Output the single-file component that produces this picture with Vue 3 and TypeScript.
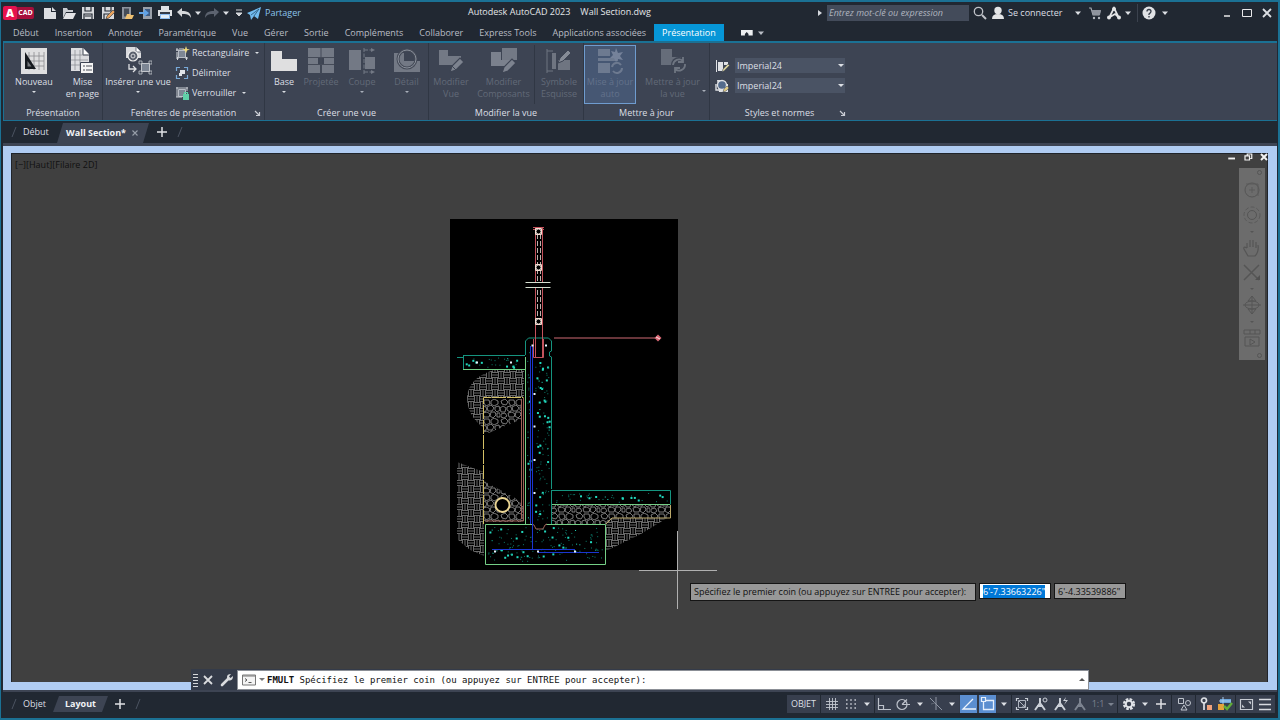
<script setup lang="ts">
import { onMounted, ref } from 'vue'

interface Cell { name: string; width: number; label: string; on?: boolean; edge?: boolean }
interface Speck { x: number; y: number; r: number; c: string }

const caret = '<path d="M5 6.5h6L8 10z" fill="currentColor"/>'
const icons: Record<string, string> = {
  caret,
  fresh: '<path d="M2 3h7v4h5v7H2z" fill="#dcdee2"/><path d="M10 2l4 4h-4z" fill="#dcdee2"/>',
  open: '<path d="M2 13V3h4l1 2h5v2H5z" fill="#c9ccd1"/><path d="M5 8h10l-3 6H2z" fill="#e2e3e6"/>',
  save: '<path d="M2 2h12v12H2z" fill="#d6d8dc"/><path d="M5 2v4h6V2M4 14V9h8v5M5 11h6" fill="none" stroke="#242b35" stroke-width="1.2"/>',
  saveas: '<path d="M2 2h12v12H2z" fill="#d6d8dc"/><path d="M5 2v4h6V2M4 14V9h5" fill="none" stroke="#242b35" stroke-width="1.2"/><path d="M6 14l1-3 6-6 2 2-6 6z" fill="#e9a35e" stroke="#242b35" stroke-width=".6"/>',
  mobileOpen: '<path d="M3 2h9v12H3z" fill="#8d939d"/><path d="M5 3.500h5v8H5z" fill="#454c57"/><path d="M6 14l2-5h3l1 1h3l-2 4z" fill="#eec071"/>',
  mobileSave: '<path d="M5 2h9v12H5z" fill="#9aa0a9"/><path d="M7 4h5v7H7z" fill="#3f5d85"/><path d="M1 7h5V4l5 4-5 4V9H1z" fill="#63a4e6"/>',
  print: '<path d="M4 1h8v4H4zM1 5h14v6H1z" fill="#dfe1e4"/><path d="M3 7h10v2H3z" fill="#343b49"/><path d="M3 9h10v5H3z" fill="#8dbbf0"/><path d="M4 10h8v3H4z" fill="#e2edf9"/>',
  undo: '<path d="M1 7l5-4v3c5 0 9 1 9 7-2-4-5-4-9-4v3z" fill="#d5d7da"/>',
  redo: '<path d="M15 7l-5-4v3c-5 0-9 1-9 7 2-4 5-4 9-4v3z" fill="#5c6370"/>',
  more: '<path d="M5 5h6M5 8h6l-3 3z" fill="#d5d7da" stroke="#d5d7da"/>',
  plane: '<path d="M1 8l14-6-3 12-4-3-3 4-1-5z" fill="#72bcf0"/><path d="M5 10l8-6-5 7" fill="none" stroke="#2a5577" stroke-width=".8"/>',
  search: '<circle cx="6.500" cy="6.500" r="4.200" fill="none" stroke="#bfc2c8" stroke-width="1.300"/><path d="M10 10l4 4" stroke="#bfc2c8" stroke-width="2"/>',
  user: '<circle cx="8" cy="5.500" r="3.700" fill="#e3e4e6"/><path d="M2 14q0-5 6-5t6 5z" fill="#e3e4e6"/>',
  cart: '<path d="M2 3h2l2 7h6l1-4H5" fill="none" stroke="#a5a9b0" stroke-width="1.200"/><path d="M5 5h9l-1 5H6z" fill="#8f949d"/><circle cx="7" cy="13" r="1.200" fill="#b5b8be"/><circle cx="12" cy="13" r="1.200" fill="#b5b8be"/>',
  autodesk: '<path d="M3 13L8 3l5 10M4 12l5-3 4 4" fill="none" stroke="#e3e4e6" stroke-width="1.700"/><circle cx="8" cy="4" r="2" fill="#e3e4e6"/><circle cx="3" cy="12.500" r="2" fill="#e3e4e6"/><circle cx="13" cy="12.500" r="2" fill="#e3e4e6"/>',
  help: '<circle cx="8" cy="8" r="6.500" fill="#e0e2e5"/><path d="M6 6.500q0-2 2-2t2 2q0 1-2 2.500v1M8 11v1.500" fill="none" stroke="#343b47" stroke-width="1.300"/>',
  minimize: '<path d="M5 11h6" stroke="#e8e8ea" stroke-width="1.500"/>',
  minimizeDoc: '<path d="M3 10h9" stroke="#f2f2f2" stroke-width="2.500"/>',
  maximize: '<path d="M3.500 4.500h9v7h-9z" fill="none" stroke="#e8e8ea"/>',
  restore: '<path d="M4 6.500h6v5.500H4zM7 5.500V4h6v6h-2" fill="none" stroke="#f2f2f2" stroke-width="1.600"/>',
  close: '<path d="M4 4l8 8M12 4l-8 8" stroke="currentColor" stroke-width="1.800"/>',
  closeDoc: '<path d="M4 4l8 8M12 4l-8 8" stroke="#f2f2f2" stroke-width="2.600"/>',
  plus: '<path d="M3 8h10M8 3v10" stroke="#dfe1e5" stroke-width="1.500"/>',
  slash: '<path d="M6 13l4-10" stroke="#4b5361"/>',
  launcher: '<path d="M5 5l4 4M9.500 6v3.500H6" fill="none" stroke="#c9ccd3" stroke-width="1.200"/>',
  grid: '<path d="M5.500 2v12M8.500 2v12M11.500 2v12M2 5.500h12M2 8.500h12M2 11.500h12" stroke="#c3c7cf" stroke-width=".9"/>',
  snap: '<path d="M3 4h10M3 8h10M3 12h10" stroke="#c3c7cf" stroke-width="1.600" stroke-dasharray="1.600 2.600"/>',
  ortho: '<path d="M2.500 2v11.500H15M2.500 9.500h5v4" fill="none" stroke="#bcc1ca" stroke-width="1.200"/>',
  polar: '<circle cx="7" cy="8.500" r="5" fill="none" stroke="#bcc1ca" stroke-width="1.200"/><path d="M7 8.500h8M7 8.500l5-5" stroke="#bcc1ca" stroke-width="1.200"/>',
  iso: '<path d="M2 2l12 12M8 1v13" stroke="#8f96a3"/><path d="M3 8l4-1" stroke="#5e6572"/>',
  track: '<path d="M15 13H2L12 3" fill="none" stroke="#eef4fc" stroke-width="1.300"/>',
  osnap: '<path d="M5 4.500h8.500v9h-10V6" fill="none" stroke="#e5effc" stroke-width="1.300"/><path d="M1.500 1.500h4v4h-4z" fill="#5c8fd2" stroke="#e5effc" stroke-width="1.200"/>',
  space: '<path d="M2.500 5V2.500H5M11 2.500h2.500V5M13.500 11v2.500H11M5 13.500H2.500V11" fill="none" stroke="#cbd0d8" stroke-width="1.200"/><path d="M4.500 4.500h7v7h-7zM5 5l6 6M8 11h3V8" fill="none" stroke="#aeb4bf"/>',
  annoVis: '<path d="M7 2v6M7 7l-5 7M7 7l5 7M4 10h6" fill="none" stroke="#cbd0d8" stroke-width="2"/><circle cx="12" cy="4" r="2" fill="none" stroke="#cbd0d8"/>',
  annoAuto: '<path d="M7 2v6M7 7l-5 7M7 7l5 7M4 10h6" fill="none" stroke="#cbd0d8" stroke-width="2"/><path d="M13 1l-3 4h3l-2 4 4-5h-3z" fill="#cbd0d8"/>',
  annoScale: '<path d="M8 2v6M8 7l-5 7M8 7l5 7M5 10h6" fill="none" stroke="#7c8390" stroke-width="2"/>',
  gear: '<circle cx="8" cy="8" r="4.800" fill="none" stroke="#dfe2e7" stroke-width="2.600" stroke-dasharray="2.500 1.270"/><circle cx="8" cy="8" r="3.200" fill="none" stroke="#dfe2e7" stroke-width="2"/>',
  shapes: '<path d="M2.500 2.500h5v5h-5zM5 14l3-5 3 5z" fill="none" stroke="#bfc4cd"/><circle cx="12" cy="7" r="2.500" fill="none" stroke="#bfc4cd"/>',
  isolate: '<circle cx="6" cy="4.500" r="2.500" fill="none" stroke="#dde0e5" stroke-width="1.700"/><path d="M6 6v8" stroke="#dde0e5" stroke-width="1.700"/><path d="M9 9h5v5H9z" fill="#f0a27c"/>',
  perf: '<path d="M3 3h11v4H3z" fill="#6ba4da"/><path d="M6 1v9M2 5h12" stroke="#a7cbee"/><path d="M1 8h6v6H1z" fill="#e4a33c"/><path d="M7 10l3 3 5-6" fill="none" stroke="#61ad38" stroke-width="2.500"/>',
  full: '<path d="M2.500 3.500h12v10h-12z" fill="none" stroke="#c5cad2" stroke-width="1.200"/><path d="M10 5.500h3v3zM4 8.500v3h3z" fill="#c5cad2"/>',
  menu: '<path d="M2 3.500h12M2 8.500h12M2 13.500h12" stroke="#d7dae0" stroke-width="1.500"/>',
  wrench: '<path d="M3 13l6-6" stroke="#dadcdf" stroke-width="2.600" stroke-linecap="round"/><path d="M8 5q0-3 4-3l-2 2.500 1.500 1.500L14 4q0 4-3 4.500T8 5" fill="#dadcdf"/>',
  prompt: '<path d="M1.500 3h13v10h-13z" fill="#f4f4f4" stroke="#777"/><path d="M2 4h12" stroke="#777"/><path d="M4 6.500l2 1.500-2 1.500M7.500 10.500h3" fill="none" stroke="#555"/>',
  rect: '<path d="M4.500 5.500h7v7h-7z" fill="#7d8694" stroke="#b8bdc6"/><path d="M2 5h3M3 3v3M2 13h3M3.500 12v3M11 13h3M12.500 12v3M5 4h5M3 7v5" stroke="#d3d6db"/><path d="M12 1l1 3 3 .5-3 1-1 3-1-3-3-1 3-.5z" fill="#f2dc7c"/>',
  clip: '<path d="M2.500 6V2.500H6M10 2.500h3.500V6M13.500 10v3.500H10M6 13.500H2.500V10" fill="none" stroke="#78a9d8" stroke-width="1.200"/><path d="M6 5h5v4H6zM5 8h3v3H5z" fill="#dfe4ea"/>',
  lock: '<path d="M4.500 4.500h7v7h-7z" fill="#7d8694" stroke="#b8bdc6"/><path d="M2 3h12M3 2v10M2 12h6M13 2v4" stroke="#c5c9d0"/><path d="M9 9h6v6H9z" fill="#5fd0a8"/><path d="M10.500 9V7.500h3V9" fill="none" stroke="#5fd0a8" stroke-width="1.200"/>',
  style1: '<path d="M2 2h1v12H2z" fill="#dfe1e5"/><path d="M4 4h5v9H4z" fill="#dfe1e5"/><path d="M10 4h4v3h-4z" fill="#dfe1e5"/><path d="M8 14l1-3 5-5 1.500 1.500-5 5z" fill="#d7cf9c" stroke="#3d4453" stroke-width=".5"/>',
  style2: '<path d="M3 2h5v4h6v8H5z" fill="#dfe1e5"/><circle cx="8" cy="7" r="4.500" fill="#546b8c" stroke="#dfe1e5" stroke-width="1.300"/><path d="M2 6v6h6" fill="none" stroke="#dfe1e5" stroke-width="1.400"/><path d="M9 14l1-3 3-3 2 2-3 3z" fill="#e0cb85" stroke="#3d4453" stroke-width=".5"/>'
}

/* 28 x 28 ribbon artwork */
const art: Record<string, string> = {
  fresh: '<path d="M1 1h26v26H1z" fill="#dfdfe0"/><path d="M9 5v18M14 5v18M19 5v18M24 5v18M5 9h19M5 14h19M5 19h19" stroke="#8b8c90" stroke-width=".8"/><path d="M5 5v17h11z" fill="#15181d"/><path d="M7.500 14v5.500h4z" fill="#75777b"/>',
  page: '<path d="M2 1h12l6 6v17H2z" fill="#dcdde0"/><path d="M14 1v7h6" fill="#fff" stroke="#3d4453"/><path d="M6 3v20M11 3v20M2 8h17M2 13h17M2 18h10" stroke="#85888e" stroke-width=".7"/><path d="M11.500 15.500h13v11h-13z" fill="#f4f4f4" stroke="#3d4453"/><path d="M14 19h2M17 19h6M14 23h2M17 23h6" stroke="#4b4f58" stroke-width="1.200"/>',
  insert: '<path d="M2 0h10l5 5v6H2z" fill="#d8d9dc"/><path d="M12 0v5h5" fill="#fff" stroke="#3d4453" stroke-width=".7"/><circle cx="9" cy="9" r="5" fill="#5a606d" stroke="#eee" stroke-width="1.200"/><circle cx="9" cy="9" r="2" fill="none" stroke="#d8d9dc"/><path d="M5 17v5h6M9 19l3 3-3 3" fill="none" stroke="#dfe1e4" stroke-width="1.300"/><path d="M17.500 16.500h8v8h-8z" fill="#7d8694" stroke="#c3c6cc"/><path d="M15 14h3v3h-3zM25 14h3v3h-3zM15 24h3v3h-3zM25 24h3v3h-3z" fill="none" stroke="#c3c6cc" stroke-width=".8"/>',
  base: '<path d="M1 4h11v8h15v12H1z" fill="#dfdfe0"/>',
  projected: '<path d="M1 1h26v9H1zM1 17h10v-6H1zM17 11h10v6H17zM1 18h12v8H1zM15 18h12v8H15z" fill="#737985"/><path d="M14 1v26M1 10.500h26M1 17.500h26" stroke="#454b58"/>',
  section: '<path d="M1 3h12v20H1zM17 10h10v12H17z" fill="#737985"/><path d="M16 1v26M16 3h8M16 25h8" stroke="#737985" stroke-dasharray="4 1.500"/><path d="M23 1l4 2-4 2zM23 23l4 2-4 2z" fill="#737985"/>',
  detail: '<path d="M1 6h10v8h16v11H1z" fill="#737985"/><circle cx="14" cy="12" r="9" fill="none" stroke="#454b58" stroke-width="3"/><circle cx="14" cy="12" r="9" fill="none" stroke="#8a909b" stroke-width="1"/>',
  editView: '<path d="M2 3h9v6h13v9H2z" fill="#737985"/><path d="M13 25l2-6 8-8 4 4-8 8z" fill="#7d838f" stroke="#3d4453" stroke-width="1.200"/><path d="M15 19l4 4" stroke="#3d4453"/>',
  editParts: '<path d="M12 1h15v12H12z" fill="#737985"/><path d="M1 5h10v8h12v6H1z" fill="#7b818d"/><path d="M12 26l2-6 8-8 4 4-8 8z" fill="#7d838f" stroke="#3d4453" stroke-width="1.200"/>',
  symbol: '<path d="M2 2v24M2 4h6M2 24h6" stroke="#6f7581"/><path d="M7 6h4v16H7zM13 13h12v10H13z" fill="#6f7581"/><path d="M13 16l2-5 8-8 3 3-8 8z" fill="#858b96" stroke="#3d4453"/>',
  auto: '<path d="M2 2h12v7H2zM2 16h12v10H2zM2 11h20v3H2z" fill="#6d7a90"/><path d="M20 1l2 5 5-1-3 4 3 4-5-1-2 3-2-4-4 0 3-3-2-4 4 1z" fill="#75829a"/><path d="M16 20a5 5 0 0 1 9-2M26 21a5 5 0 0 1-9 3" fill="none" stroke="#6d7a90" stroke-width="2"/>',
  update: '<path d="M2 2h11v8h9v8H2z" fill="#666d7a"/><circle cx="20" cy="18" r="8" fill="#3d4453"/><path d="M14 18a6 6 0 0 1 10-4M26 17a6 6 0 0 1-10 5M24 10v5h-5M16 26v-5h5" fill="none" stroke="#6f7682" stroke-width="1.800"/>'
}

const navArt = [
  { drop: false, d: '<circle cx="10" cy="10" r="7" fill="none" stroke="#555"/><path d="M4 4h12v12M7 10h6M10 7v6" fill="none" stroke="#5a5a5a"/>' },
  { drop: true, d: '<circle cx="10" cy="10" r="4.500" fill="none" stroke="#555"/><circle cx="10" cy="10" r="8" fill="none" stroke="#5a5a5a" stroke-dasharray="4 2"/>' },
  { drop: false, d: '<path d="M5 10V5M8 9V2M11 9V2M14 10V4M5 10q-4-2-3 1l4 7h7q4-4 3-11" fill="none" stroke="#555" stroke-width="1.200"/>' },
  { drop: true, d: '<path d="M2 2l15 15M17 2L2 17" stroke="#555" stroke-width="1.500"/><path d="M13 17h5v-5z" fill="#505050"/>' },
  { drop: true, d: '<path d="M10 1v18M1 10h18M10 1L6 6h8zM10 19l-4-5h8z" fill="none" stroke="#555"/><ellipse cx="10" cy="10" rx="7" ry="4" fill="none" stroke="#555"/>' },
  { drop: false, d: '<path d="M2 2h16v4H2zM3 9h14v9H3zM8 11l5 3-5 3zM8 2v4M13 2v4" fill="none" stroke="#555"/>' }
]

const quick: Cell[] = [
  { name: 'fresh', width: 19, label: 'Nouveau' }, { name: 'open', width: 19, label: 'Ouvrir' },
  { name: 'save', width: 20, label: 'Enregistrer' }, { name: 'saveas', width: 19, label: 'Enregistrer sous' },
  { name: 'mobileOpen', width: 19, label: 'Ouvrir depuis mobile' }, { name: 'mobileSave', width: 19, label: 'Enregistrer sur mobile' },
  { name: 'print', width: 20, label: 'Tracer' }, { name: 'undo', width: 18, label: 'Annuler' },
  { name: 'caret', width: 10, label: 'Historique' }, { name: 'redo', width: 18, label: 'Rétablir' },
  { name: 'caret', width: 10, label: 'Historique' }, { name: 'more', width: 15, label: 'Personnaliser' }
]
const tabs = ['Début', 'Insertion', 'Annoter', 'Paramétrique', 'Vue', 'Gérer', 'Sortie', 'Compléments', 'Collaborer', 'Express Tools', 'Applications associées', 'Présentation']
const account: Cell[] = [
  { name: 'caret', width: 12, label: 'Compte' }, { name: 'cart', width: 22, label: 'App Store' }, { name: 'autodesk', width: 16, label: 'Autodesk' },
  { name: 'caret', width: 12, label: 'Options' }, { name: 'help', width: 22, label: 'Aide', edge: true }, { name: 'caret', width: 12, label: 'Options aide' }
]
const views = ['rect', 'clip', 'lock']
const viewLabels = ['Rectangulaire', 'Délimiter', 'Verrouiller']
const createItems = [
  { art: 'base', label: 'Base', off: false, drop: true }, { art: 'projected', label: 'Projetée', off: true, drop: false },
  { art: 'section', label: 'Coupe', off: true, drop: true }, { art: 'detail', label: 'Détail', off: true, drop: true }
]
const status: Cell[] = [
  { name: 'grid', width: 22, label: 'Grille', edge: true }, { name: 'snap', width: 17, label: 'Résolution' }, { name: 'caret', width: 15, label: 'Options de résolution' },
  { name: 'ortho', width: 19, label: 'Ortho', edge: true }, { name: 'polar', width: 20, label: 'Polaire' }, { name: 'caret', width: 14, label: 'Options polaires' },
  { name: 'iso', width: 18, label: 'Isométrique' }, { name: 'caret', width: 14, label: 'Options isométriques' },
  { name: 'track', width: 19, label: 'Repérage', on: true }, { name: 'osnap', width: 19, label: 'Accrochage', on: true }, { name: 'caret', width: 14, label: 'Options accrochage' },
  { name: 'space', width: 20, label: 'Fenêtre', edge: true }, { name: 'annoVis', width: 20, label: 'Visibilité annotations' }, { name: 'annoAuto', width: 20, label: 'Échelle auto' }, { name: 'annoScale', width: 18, label: 'Échelle' }
]
const statusEnd: Cell[] = [
  { name: 'gear', width: 22, label: 'Espace de travail', edge: true }, { name: 'caret', width: 12, label: 'Options espace' }, { name: 'plus', width: 20, label: 'Ajouter' },
  { name: 'shapes', width: 24, label: 'Unités', edge: true }, { name: 'isolate', width: 20, label: 'Isoler', edge: true }, { name: 'perf', width: 20, label: 'Performances' },
  { name: 'full', width: 20, label: 'Plein écran', edge: true }, { name: 'menu', width: 20, label: 'Personnalisation' }
]

/* Concrete aggregate: seeded so that the section always looks the same */
let seed = 41
const rnd = () => { seed = (seed * 16807) % 2147483647; return seed / 2147483647 }
function scatter(x: number, y: number, w: number, h: number, n: number): Speck[] {
  return Array.from({ length: n }, () => {
    const k = rnd()
    return { x: x + 1 + rnd() * (w - 3), y: y + 1 + rnd() * (h - 3), r: k > 0.8 ? 2 : 1, c: k > 0.72 ? '#22d8bd' : '#0c7d6c' }
  })
}
const specks: Speck[] = [
  ...scatter(464, 356, 60, 13, 26), ...scatter(534, 360, 17, 162, 100), ...scatter(526, 345, 6, 178, 30),
  ...scatter(486, 526, 118, 37, 140), ...scatter(553, 492, 116, 12, 40)
]
const bars = [[477, 362.500], [511, 362.500], [532.500, 345.500], [546, 345.500], [534.500, 394], [534.500, 426.500], [534.500, 460], [534.500, 493], [495, 551.500], [538, 551.500], [575, 551.500]]

const coordX = ref<HTMLInputElement | null>(null)
onMounted(() => { coordX.value?.focus(); coordX.value?.select() })
</script>

<template>
  <main class="app">
    <header class="titlebar">
      <button class="logo" aria-label="Menu AutoCAD"><b>A</b><span>CAD</span></button>
      <button v-for="(q, i) in quick" :key="i" class="cell" :style="{ width: q.width + 'px' }" :aria-label="q.label"><svg class="ico" viewBox="0 0 16 16" v-html="icons[q.name]" /></button>
      <button class="share"><svg class="ico" viewBox="0 0 16 16" v-html="icons.plane" />Partager</button>
      <h1 class="title"><span>Autodesk AutoCAD 2023</span><span>Wall Section.dwg</span></h1>
      <span class="play"></span>
      <input class="search" type="text" placeholder="Entrez mot-clé ou expression" aria-label="Recherche">
      <button class="cell w20" aria-label="Rechercher"><svg class="ico" viewBox="0 0 16 16" v-html="icons.search" /></button>
      <button class="signin"><svg class="ico" viewBox="0 0 16 16" v-html="icons.user" />Se connecter</button>
      <button v-for="(q, i) in account" :key="'a' + i" class="cell" :class="{ edge: q.edge }" :style="{ width: q.width + 'px' }" :aria-label="q.label"><svg class="ico" viewBox="0 0 16 16" v-html="icons[q.name]" /></button>
      <div class="winctl">
        <button v-for="n in ['minimize', 'maximize', 'close']" :key="n" class="cell w20" :aria-label="n"><svg class="ico" viewBox="0 0 16 16" v-html="icons[n]" /></button>
      </div>
    </header>

    <nav class="tabs">
      <button v-for="t in tabs" :key="t" :class="{ active: t === 'Présentation' }">{{ t }}</button>
      <button class="collapse" aria-label="Réduire le ruban"><i></i><svg class="ico" viewBox="0 0 16 16" v-html="icons.caret" /></button>
    </nav>

    <section class="ribbon">
      <div class="panel p1">
        <div class="tools">
          <button class="big"><svg class="art" viewBox="0 0 28 28" v-html="art.fresh" /><span>Nouveau</span><i class="tri"></i></button>
          <button class="big"><svg class="art" viewBox="0 0 28 28" v-html="art.page" /><span>Mise<br>en page</span></button>
        </div>
        <h2>Présentation</h2>
      </div>
      <div class="panel p2">
        <div class="tools">
          <button class="big"><svg class="art" viewBox="0 0 28 28" v-html="art.insert" /><span>Insérer une vue</span><i class="tri"></i></button>
          <div class="rows">
            <button v-for="(v, i) in views" :key="v"><svg class="ico" viewBox="0 0 16 16" v-html="icons[v]" />{{ viewLabels[i] }}<i v-if="i !== 1" class="tri"></i></button>
          </div>
        </div>
        <h2>Fenêtres de présentation</h2>
        <svg class="launch" viewBox="0 0 14 14" v-html="icons.launcher" />
      </div>
      <div class="panel p3">
        <div class="tools">
          <button v-for="c in createItems" :key="c.art" class="big" :class="{ off: c.off }"><svg class="art" viewBox="0 0 28 28" v-html="art[c.art]" /><span>{{ c.label }}</span><i v-if="c.drop" class="tri"></i></button>
        </div>
        <h2>Créer une vue</h2>
      </div>
      <div class="panel p4">
        <div class="tools">
          <button class="big off"><svg class="art" viewBox="0 0 28 28" v-html="art.editView" /><span>Modifier<br>Vue</span></button>
          <button class="big off"><svg class="art" viewBox="0 0 28 28" v-html="art.editParts" /><span>Modifier<br>Composants</span></button>
          <button class="big off ruled"><svg class="art" viewBox="0 0 28 28" v-html="art.symbol" /><span>Symbole<br>Esquisse</span></button>
        </div>
        <h2>Modifier la vue</h2>
      </div>
      <div class="panel p5">
        <div class="tools">
          <button class="big off lit"><svg class="art" viewBox="0 0 28 28" v-html="art.auto" /><span>Mise à jour<br>auto</span></button>
          <button class="big off"><svg class="art" viewBox="0 0 28 28" v-html="art.update" /><span>Mettre à jour<br>la vue</span><i class="tri side"></i></button>
        </div>
        <h2>Mettre à jour</h2>
      </div>
      <div class="panel p6">
        <div class="styles">
          <label v-for="n in ['style1', 'style2']" :key="n"><svg class="ico" viewBox="0 0 16 16" v-html="icons[n]" /><span class="pick"><select :aria-label="n === 'style1' ? 'Style de vue en coupe' : 'Style de vue de détail'"><option>Imperial24</option></select><i class="tri"></i></span></label>
        </div>
        <h2>Styles et normes</h2>
        <svg class="launch" viewBox="0 0 14 14" v-html="icons.launcher" />
      </div>
    </section>

    <nav class="files">
      <svg class="ico" viewBox="0 0 16 16" v-html="icons.slash" />
      <button class="plain">Début</button>
      <button class="current">Wall Section*<svg class="ico" viewBox="0 0 16 16" v-html="icons.close" /></button>
      <button class="cell w20" aria-label="Nouveau dessin"><svg class="ico" viewBox="0 0 16 16" v-html="icons.plus" /></button>
      <svg class="ico" viewBox="0 0 16 16" v-html="icons.slash" />
    </nav>

    <section class="frame">
      <div class="canvas">
        <span class="viewlabel">[−][Haut][Filaire 2D]</span>
        <svg class="sheet" viewBox="450 219 228 351" role="img" aria-label="Coupe de mur">
          <defs>
            <pattern id="weave" width="12" height="12" patternUnits="userSpaceOnUse">
              <path d="M0 .5h6M0 3h6M0 5.500h6M6.500 0v6M9 0v6M11.500 0v6M.5 6v6M3 6v6M5.500 6v6M6 6.500h6M6 9h6M6 11.500h6" stroke="#858585" stroke-width=".8" />
            </pattern>
            <pattern id="gravel" width="25" height="19" patternUnits="userSpaceOnUse">
              <path d="M1 2l4-2 3 3-2 3-4-1zM9 1l5 0 1 4-4 2-2-3zM16 2l3-2 4 2 0 3-4 2-3-2zM0 9l3-2 3 2-1 4-4 0zM7 8l3-1 2 3-2 3-3-2zM12 8l4-2 3 3-2 3-4 0zM20 8l4-1 1 4-3 2-2-2zM1 15l4-1 2 3-3 2-3-1zM8 14l4-1 3 2-1 3-5 0zM16 13l4 0 1 3-3 3-3-2zM22 14l3 0 0 4-3 0z" fill="none" stroke="#969696" stroke-width=".8" />
            </pattern>
          </defs>
          <path d="M450 219h228v351H450z" fill="#000" />
          <path d="M494 370h30v28h-40v30q-17-12-17-31 2-20 27-27z" fill="url(#weave)" />
          <path d="M457 462l27 10v84l-14-6-13-11z" fill="url(#weave)" />
          <path d="M606 524l6-6h55l-26 16-35 17z" fill="url(#weave)" />
          <path d="M484 399h38v20l-38 16zM484 481l31 17 8 7v17h-39zM552 505h118v13h-58l-6 6h-54z" fill="url(#gravel)" />
          <rect v-for="(s, i) in specks" :key="i" :x="s.x" :y="s.y" :width="s.r" :height="s.r" :fill="s.c" />
          <path d="M457 357.500h6M463 355.500h62M525.500 355v-14l3-3h20l3 3v10l-2 1v4l2 1v132M552 490.500h118.500v14M551.500 490v34M463.500 356v13" fill="none" stroke="#15947f" />
          <path d="M463 369.500h62M525.500 357v167M485.500 524.500h47M546 524.500h59.500v40h-120v-40M552 504.500h118" fill="none" stroke="#74cf86" />
          <path d="M532 524l2 1 2 4h7l2-4 2-1M523.500 398v123h-38M521.500 399v120" fill="none" stroke="#a06358" />
          <path d="M483.500 524V397.500h40" fill="none" stroke="#d3bf65" stroke-dasharray="14 1" />
          <path d="M670.500 505v13H612l-6 6" fill="none" stroke="#bba86a" />
          <path d="M530.500 346v178M532.500 345v205M492 549.500h83M538 552.500h61" fill="none" stroke="#1b35d0" />
          <path d="M535.500 228v129M542.500 228v129M533.500 339v18.500h10V339M533 227.500h11M533 229.500h11" fill="none" stroke="#c4525c" />
          <path d="M554 338h101" stroke="#cf6b74" />
          <path d="M537.500 234v88M540.500 234v88" stroke="#bdb1ae" stroke-dasharray="5 2" />
          <path d="M526 285h24" stroke="#000" stroke-width="4" />
          <path d="M525.500 282.500h25M525.500 287.500h25" stroke="#d5ded0" />
          <g v-for="y in [231.500, 267.500, 321.500]" :key="y">
            <path :d="`M535.500 ${y - 3}h6v6h-6z`" fill="#000" stroke="#f2d9cd" /><circle cx="538.500" :cy="y" r="2.600" fill="#000" stroke="#fff0e8" />
          </g>
          <path d="M658 334.500l3.500 3.500-3.500 3.500-3.500-3.500z" fill="#d96875" /><path d="M656 337l4 2" stroke="#fff" stroke-width=".8" />
          <circle cx="502.500" cy="505" r="7" fill="#000" stroke="#ecd693" stroke-width="1.800" />
          <rect v-for="(b, i) in bars" :key="'b' + i" :x="b[0] - 1" :y="b[1] - 1" width="2" height="2" fill="#e9f5ff" />
        </svg>
        <svg class="cross" viewBox="0 0 78 78"><path d="M38.500 0v78M0 39.500h78" stroke="#b0b0b0" /></svg>
        <div class="dynamic">
          <label for="cx">Spécifiez le premier coin (ou appuyez sur ENTREE pour accepter):</label>
          <input id="cx" ref="coordX" type="text" class="sel" value="6'-7.33663226&quot;">
          <input type="text" aria-label="Y" value="6'-4.33539886&quot;">
        </div>
        <div class="docctl">
          <button v-for="n in ['minimizeDoc', 'restore', 'closeDoc']" :key="n" class="cell" :aria-label="n"><svg class="ico" viewBox="0 0 16 16" v-html="icons[n]" /></button>
        </div>
        <div class="navbar">
          <i class="knob"></i>
          <template v-for="(n, i) in navArt" :key="i">
            <button :aria-label="'Navigation ' + (i + 1)"><svg viewBox="0 0 20 20" v-html="n.d" /></button>
            <i v-if="n.drop" class="tri"></i>
          </template>
          <i class="knob"></i>
        </div>
      </div>
      <div class="command">
        <i class="grip"></i>
        <button class="cell" aria-label="Fermer"><svg class="ico" viewBox="0 0 16 16" v-html="icons.close" /></button>
        <button class="cell" aria-label="Personnaliser"><svg class="ico" viewBox="0 0 16 16" v-html="icons.wrench" /></button>
        <div class="line">
          <svg class="ico" viewBox="0 0 16 16" v-html="icons.prompt" /><i class="tri"></i>
          <label for="cmd"><b>FMULT</b> Spécifiez le premier coin (ou appuyez sur ENTREE pour accepter):</label>
          <input id="cmd" type="text"><i class="up"></i>
        </div>
      </div>
    </section>

    <footer class="status">
      <nav class="layouts">
        <svg class="ico" viewBox="0 0 16 16" v-html="icons.slash" />
        <button class="plain">Objet</button>
        <button class="current">Layout</button>
        <button class="cell w20" aria-label="Nouvelle présentation"><svg class="ico" viewBox="0 0 16 16" v-html="icons.plus" /></button>
        <svg class="ico" viewBox="0 0 16 16" v-html="icons.slash" />
      </nav>
      <div class="toggles">
        <button class="space">OBJET</button>
        <button v-for="(s, i) in status" :key="i" class="cell" :class="{ on: s.on, edge: s.edge }" :style="{ width: s.width + 'px' }" :aria-label="s.label"><svg class="ico" viewBox="0 0 16 16" v-html="icons[s.name]" /></button>
        <button class="scale">1:1<i class="tri"></i></button>
        <button v-for="(s, i) in statusEnd" :key="'e' + i" class="cell" :class="{ edge: s.edge }" :style="{ width: s.width + 'px' }" :aria-label="s.label"><svg class="ico" viewBox="0 0 16 16" v-html="icons[s.name]" /></button>
      </div>
    </footer>
  </main>
</template>

<style>
body { margin: 0; background: #212832; }
</style>

<style scoped>
* { box-sizing: border-box; }
.app { height: 100vh; display: flex; flex-direction: column; background: #212832; border: 2px solid #1b7194; border-width: 2px 2px 2px 1px; padding: 0 1px 0 2px; color: #dcdfe4; font: 9px/12px "Open Sans", "Noto Sans", sans-serif; overflow: hidden; }
button { background: none; border: 0; padding: 0; margin: 0; color: inherit; font: inherit; white-space: nowrap; }
input, select { font: inherit; color: inherit; border: 0; margin: 0; outline: 0; min-width: 0; }
h1, h2 { margin: 0; font: inherit; }
.ico { width: 16px; height: 16px; flex: none; display: block; }
.cell { display: flex; align-items: center; justify-content: center; flex: none; height: 18px; }
.w20 { width: 20px; }
.tri { width: 0; height: 0; border: 3px solid transparent; border-top-color: currentColor; border-bottom: 0; flex: none; }

.titlebar { height: 21px; flex: none; display: flex; align-items: center; }
.logo { display: flex; align-items: center; width: 31px; height: 12px; margin-right: 6px; background: #a50f3b; color: #fff; font-size: 7px; font-weight: 700; flex: none; border-radius: 2px; }
.logo b { width: 14px; height: 14px; line-height: 14px; font-size: 11px; background: #e5124e; border-radius: 2px; }
.logo span { flex: 1; }
.share { display: flex; align-items: center; gap: 3px; color: #8cc4ec; }
.title { flex: 1; display: flex; justify-content: center; gap: 10px; padding-bottom: 2px; color: #e4e6e9; white-space: nowrap; }
.play { border: 3px solid transparent; border-left: 4px solid #d5d8de; border-right: 0; margin-right: 5px; }
.search { width: 142px; height: 16px; background: #434b5a; padding: 0 2px; font-style: italic; margin-right: 1px; }
.search::placeholder { color: #b0b5bf; opacity: 1; }
.signin { display: flex; align-items: center; gap: 2px; width: 82px; }
.titlebar .edge { border-left: 1px solid #3b424e; margin-left: 3px; }
.winctl { display: flex; margin-left: 46px; }

.tabs { height: 18px; flex: none; display: flex; align-items: stretch; padding: 1px 0 0 2px; color: #b9bdc5; }
.tabs button { padding: 0 8px; }
.tabs .active { background: #0696d7; color: #fff; }
.tabs .collapse { display: flex; align-items: center; margin-left: 9px; }
.collapse i { width: 12px; height: 6px; background: #eceef0; clip-path: polygon(0 0, 100% 0, 100% 100%, 65% 100%, 65% 75%, 50% 40%, 35% 75%, 35% 100%, 0 100%); }

.ribbon { flex: none; height: 80px; display: flex; background: #3d4453; border: 1px solid #1b7194; border-top-width: 2px; border-right: 0; }
.panel { position: relative; display: flex; flex-direction: column; flex: none; border-right: 1px solid #303744; }
.p1 { width: 99px; } .p2 { width: 162px; } .p3 { width: 164px; } .p4 { width: 155px; } .p5 { width: 126px; } .p6 { width: 139px; border: 0; }
.panel h2 { height: 15px; line-height: 15px; text-align: center; }
.tools { flex: 1; display: grid; padding-top: 2px; }
.p1 .tools { grid-template-columns: 60px 37px; } .p2 .tools { grid-template-columns: 70px 91px; }
.p3 .tools { grid-template-columns: 38px 36px 46px 43px; } .p4 .tools { grid-template-columns: 44px 61px 49px; }
.p5 .tools { grid-template-columns: 52px 73px; }
.big { display: flex; flex-direction: column; align-items: center; height: 59px; position: relative; }
.big .art { width: 28px; height: 28px; margin: 2px 0 1px; flex: none; }
.big .tri { border-width: 2px; border-bottom: 0; margin-top: 3px; }
.off { color: #626a78; }
.off > .tri { color: #a9afba; }
.big .side { position: absolute; right: 3px; bottom: 12px; }
.lit { border: 1px solid #6f9ccf; background: #465773; color: #63728b; }
.lit .art { margin-top: 1px; }
.ruled { border-left: 1px solid #303744; }
.rows { display: flex; flex-direction: column; gap: 4px; padding-left: 1px; }
.rows button { display: flex; align-items: center; gap: 2px; height: 16px; }
.rows .tri { margin-left: 4px; border-width: 2px; border-bottom: 0; }
.launch { position: absolute; right: 0; bottom: 0; width: 14px; height: 14px; }
.styles { flex: 1; display: flex; flex-direction: column; gap: 5px; padding: 15px 4px 0; }
.styles label { display: flex; gap: 5px; height: 15px; }
.pick { flex: 1; display: flex; align-items: center; background: #4a5364; padding-right: 1px; }
.pick select { flex: 1; appearance: none; background: transparent; padding: 0 2px; height: 15px; }

.files { height: 22px; flex: none; display: flex; align-items: center; padding-left: 3px; }
.plain { text-align: left; padding-left: 1px; }
.files .plain { width: 35px; }
.current { background: #3d4453; color: #f1f3f6; font-weight: 700; clip-path: polygon(6px 0, 100% 0, calc(100% - 6px) 100%, 0 100%); }
.files .current { display: flex; align-items: center; justify-content: center; gap: 4px; width: 92px; height: 20px; align-self: flex-end; margin-right: 3px; }
.files .current .ico { width: 10px; height: 10px; color: #979ea9; }

.frame { position: relative; flex: 1; min-height: 0; display: flex; padding: 7px 9px 8px 8px; background: #b0ccf2; border: solid #3d4453; border-width: 3px 0 2px; background-clip: padding-box; }
.canvas { position: relative; flex: 1; background: #404040; border: 1px solid #20242a; border-bottom: 0; }
.viewlabel { position: absolute; left: 3px; top: 5px; color: #101010; }
.sheet { position: absolute; left: 438px; top: 65px; width: 228px; height: 351px; }
.cross { position: absolute; left: 627px; top: 377px; width: 78px; height: 78px; }
.dynamic { position: absolute; left: 678px; top: 429px; display: flex; align-items: flex-start; gap: 3px; color: #101010; }
.dynamic label { height: 18px; line-height: 16px; width: 286px; padding-left: 3px; background: #989898; border: 1px solid #151515; white-space: nowrap; }
.dynamic input { width: 72px; height: 16px; padding: 0 3px; background: #989898; border: 1px solid #151515; }
.dynamic .sel { background: #fff; }
.sel::selection { background: #0078d7; color: #fff; }
.docctl { position: absolute; right: -5px; top: -6px; display: flex; }
.docctl .cell { width: 16px; }
.docctl .ico { width: 12px; height: 12px; }
.navbar { position: absolute; right: 2px; top: 14px; width: 26px; height: 192px; padding: 2px 3px; background: #6c6c6c; color: #555; display: flex; flex-direction: column; align-items: center; justify-content: space-between; }
.navbar button, .navbar svg { width: 20px; height: 20px; display: block; }
.navbar .tri { border-width: 2px; border-bottom: 0; }
.knob { width: 5px; height: 5px; border: 1px solid #555; border-radius: 50%; align-self: flex-end; }

.command { position: absolute; left: 188px; right: 188px; bottom: 0; height: 21px; display: flex; align-items: center; background: #343b49; color: #dadcdf; }
.grip { width: 5px; height: 14px; margin: 0 2px; background: radial-gradient(circle, #d5d7da 1px, transparent 1px) 0 0 / 2px 3px; }
.command .cell { width: 16px; }
.command .cell + .cell { margin-left: 3px; }
.line { flex: 1; height: 20px; margin-left: 2px; display: flex; align-items: center; background: #fff; color: #111; font: 9px/12px "DejaVu Sans Mono", monospace; padding: 0 3px; gap: 2px; border: 1px solid #8b8f96; }
.line > .tri { color: #777; }
.line label { white-space: pre; }
.line input { flex: 1; background: none; }
.up { border: 3px solid transparent; border-bottom-color: #555; border-top: 0; }

.status { height: 26px; flex: none; display: flex; justify-content: space-between; align-items: center; padding: 0 2px 2px 0; }
.layouts, .toggles { display: flex; align-items: center; }
.layouts { padding-left: 3px; }
.layouts .plain { width: 31px; }
.layouts .current { width: 55px; height: 16px; margin-right: 2px; }
.toggles > button { background: #383f4e; height: 18px; }
.toggles .on { background: #5b8ed0; border: solid #343b49; border-width: 0 1px; }
.toggles .edge { border-left: 1px solid #212832; }
.toggles .on .ico { margin: 0 -1px; }
.space { width: 33px; }
.scale { width: 28px; display: flex; align-items: center; justify-content: center; gap: 4px; color: #7c8390; }
</style>
